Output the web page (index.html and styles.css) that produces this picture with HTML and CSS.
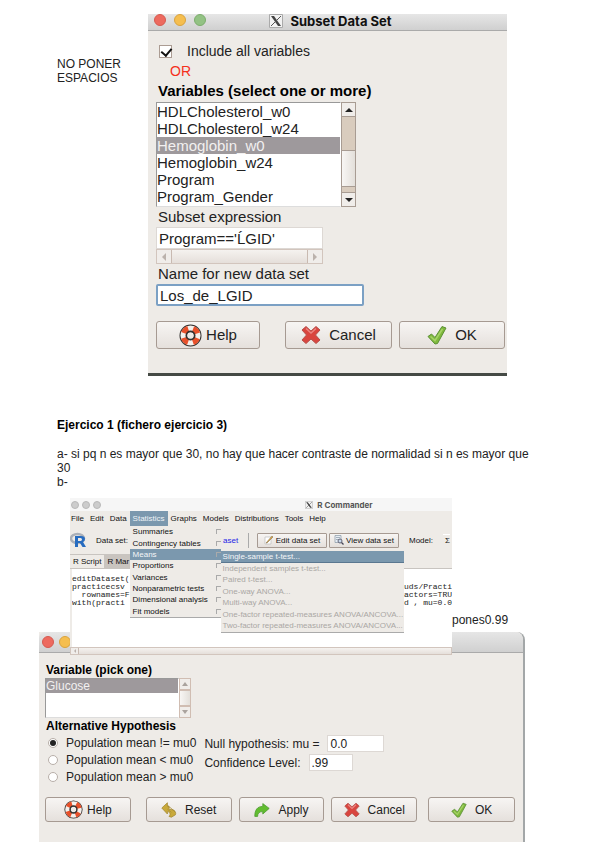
FILE: index.html
```html
<!DOCTYPE html>
<html lang="es">
  <head>
    <meta charset="UTF-8" />
    <meta name="viewport" content="width=device-width, initial-scale=1.0" />
    <title>Ejercicios R Commander</title>
    <link rel="stylesheet" href="styles.css">
  </head>
  <body>
    <!-- Shared icons -->
    <svg class="sprite" aria-hidden="true">
      <symbol id="icon-help" viewBox="0 0 24 24">
        <circle cx="12" cy="12" r="7.5" fill="none" stroke="#33302e" stroke-width="8" />
        <circle cx="12" cy="12" r="7.5" fill="none" stroke="#f4f0ec" stroke-width="6" />
        <circle cx="12" cy="12" r="7.5" fill="none" stroke="#e8502a" stroke-width="6" stroke-dasharray="6.6 5.18" stroke-dashoffset="3.3" transform="rotate(45 12 12)" />
        <circle cx="12" cy="12" r="4.5" fill="none" stroke="#33302e" stroke-width="1.5" />
      </symbol>
      <symbol id="icon-cancel" viewBox="0 0 20 20">
        <path d="M5 1.5 10 6l5-4.500 4 3.500-4.500 5 4.500 5-4 3.500-5-4.500-5 4.500-4-3.500 4.500-5L1 5z" fill="#d9453f" stroke="#b5504b" stroke-linejoin="round" />
        <path d="M5 3.500 10 8l5-4.500" fill="none" stroke="#ea8580" stroke-width="1.500" />
      </symbol>
      <symbol id="icon-ok" viewBox="0 0 20 20">
        <path d="M1 11.500 4.500 9l3.500 3.500L15 1.500 19 3 10.500 18.500 8 19z" fill="#7fb93c" stroke="#5b8f36" stroke-linejoin="round" />
        <path d="M3.500 11.500 8 15.500 15.500 4" fill="none" stroke="#a6d268" stroke-width="1.500" />
      </symbol>
      <symbol id="icon-reset" viewBox="0 0 20 20">
        <path d="M1 7.500 8 1v4h2v4l6 1c2 2 3 4 2 6l-5 3-3-1c2-2 2-4-1-6H8v3z" fill="#c9a93a" stroke="#a68b35" stroke-linejoin="round" />
        <path d="m8 5 5 3 5 5M8 9l5 4" fill="none" stroke="#a68b35" />
      </symbol>
      <symbol id="icon-apply" viewBox="0 0 20 20">
        <path d="m19 8-8-6v3.500C4 5.500 1 10 1 18h3.500c0-4 2-6 6.500-6v3z" fill="#62bd2f" stroke="#4c9c30" stroke-linejoin="round" />
      </symbol>
      <symbol id="icon-x11" viewBox="0 0 14 14">
        <path d="M.5.5h13v13H.5z" fill="#f2f2f2" stroke="#aaa" />
        <path d="M2 2h3l7 10H9z" fill="#444" />
        <path d="M12 2 2 12" stroke="#555" />
      </symbol>
      <symbol id="icon-edit" viewBox="0 0 10 10">
        <path d="M1 2h6v7H1z" fill="#fff" stroke="#bbb" stroke-width=".7" />
        <path d="m2 8 6-7 1 1-6 6z" fill="#e2a83d" stroke="#75664d" stroke-width=".5" />
      </symbol>
      <symbol id="icon-view" viewBox="0 0 10 10">
        <path d="M1 .5h6v7H1zM2 2.500h4M2 4.500h4" fill="#e8eef4" stroke="#8796a5" stroke-width=".7" />
        <circle cx="6" cy="6" r="2" fill="#c7d9ec" stroke="#667" />
        <path d="m7.500 7.500 2 2" stroke="#445" stroke-width="1.200" />
      </symbol>
      <symbol id="icon-r" viewBox="0 0 16 16">
        <ellipse cx="7.500" cy="6.500" rx="6.500" ry="4.500" fill="none" stroke="#abb0b8" stroke-width="2.500" />
        <path d="M5 4h6q4 0 4 3 0 2-2 3l3 5h-3.500L10 11H8v4H5zm3 2v3h2.500q1.500 0 1.500-1.500T10.500 6z" fill="#276cc0" fill-rule="evenodd" />
      </symbol>
    </svg>

    <main class="page">
      <section class="note-row">
        <p class="note">NO PONER ESPACIOS</p>
        <form class="dialog subset">
          <header class="titlebar">
            <span class="lights"><i class="red"></i><i class="yellow"></i><i class="green"></i></span>
            <svg class="x11"><use href="#icon-x11" /></svg>
            <h2>Subset Data Set</h2>
          </header>
          <div class="subset-body">
            <label class="check-row"><input type="checkbox" checked /> Include all variables</label>
            <p class="or">OR</p>
            <label class="strong" for="variables">Variables (select one or more)</label>
            <div class="list">
              <select id="variables" multiple size="6">
                <option>HDLCholesterol_w0</option>
                <option>HDLCholesterol_w24</option>
                <option selected>Hemoglobin_w0</option>
                <option>Hemoglobin_w24</option>
                <option>Program</option>
                <option>Program_Gender</option>
              </select>
              <div class="scroll">
                <button type="button" class="up" aria-label="Up"></button>
                <span class="thumb"></span>
                <button type="button" class="down" aria-label="Down"></button>
              </div>
            </div>
            <label for="expression">Subset expression</label>
            <div class="expression">
              <input type="text" id="expression" value="Program=='ĹGID'" />
              <div class="hscroll">
                <button type="button" class="left" aria-label="Left"></button>
                <button type="button" class="right" aria-label="Right"></button>
              </div>
            </div>
            <label for="newName">Name for new data set</label>
            <input type="text" id="newName" class="new-name" value="Los_de_LGID" />
            <div class="subset-buttons">
              <button type="button" class="btn help"><svg><use href="#icon-help" /></svg>Help</button>
              <button type="button" class="btn"><svg><use href="#icon-cancel" /></svg>Cancel</button>
              <button type="button" class="btn"><svg><use href="#icon-ok" /></svg>OK</button>
            </div>
          </div>
        </form>
      </section>

      <h1>Ejercico 1 (fichero ejercicio 3)</h1>
      <p>a- si pq n es mayor que 30, no hay que hacer contraste de normalidad si n es mayor que 30</p>
      <p>b-</p>

      <section class="commander-row">
        <div class="commander">
          <header class="titlebar">
            <span class="lights"><i></i><i></i><i></i></span>
            <svg class="x11"><use href="#icon-x11" /></svg>
            <h2>R Commander</h2>
          </header>
          <nav class="menubar">
            <a href="#">File</a>
            <a href="#">Edit</a>
            <a href="#">Data</a>
            <div class="menu-holder">
              <a href="#" class="active">Statistics</a>
              <ul class="menu">
                <li>Summaries</li>
                <li>Contingency tables</li>
                <li class="active">Means</li>
                <li>Proportions</li>
                <li>Variances</li>
                <li>Nonparametric tests</li>
                <li>Dimensional analysis</li>
                <li>Fit models</li>
              </ul>
              <ul class="menu submenu">
                <li class="active">Single-sample t-test...</li>
                <li>Independent samples t-test...</li>
                <li>Paired t-test...</li>
                <li>One-way ANOVA...</li>
                <li>Multi-way ANOVA...</li>
                <li>One-factor repeated-measures ANOVA/ANCOVA...</li>
                <li>Two-factor repeated-measures ANOVA/ANCOVA...</li>
              </ul>
            </div>
            <a href="#">Graphs</a>
            <a href="#">Models</a>
            <a href="#">Distributions</a>
            <a href="#">Tools</a>
            <a href="#">Help</a>
          </nav>
          <div class="toolbar">
            <svg class="r-logo"><use href="#icon-r" /></svg>
            <span class="data-label">Data set:</span>
            <button type="button" class="dataset">aset</button>
            <button type="button" class="tool"><svg><use href="#icon-edit" /></svg>Edit data set</button>
            <button type="button" class="tool"><svg><use href="#icon-view" /></svg>View data set</button>
            <span class="model">Model:</span>
            <span class="model-name">Σ</span>
          </div>
          <div class="tabs">
            <button type="button" class="tab">R Script</button>
            <button type="button" class="tab dim">R Mar</button>
          </div>
          <div class="script">
<pre>editDataset(
practicecsv
  rownames=F
with(practi</pre>
<pre>
uds/Practi
actors=TRUE
d , mu=0.0</pre>
          </div>
          <div class="hscroll">
            <button type="button" class="left" aria-label="Left"></button>
          </div>
        </div>
        <span class="answer">pones0.99</span>
      </section>

      <form class="dialog ttest">
        <header class="titlebar">
          <span class="lights"><i class="red"></i><i class="yellow"></i></span>
        </header>
        <div class="ttest-body">
          <label class="strong" for="variable">Variable (pick one)</label>
          <div class="list">
            <select id="variable" size="2">
              <option selected>Glucose</option>
            </select>
            <div class="scroll">
              <button type="button" class="up" aria-label="Up"></button>
              <span class="thumb"></span>
              <button type="button" class="down" aria-label="Down"></button>
            </div>
          </div>
          <p class="strong">Alternative Hypothesis</p>
          <div class="options">
            <div class="radios">
              <label><input type="radio" name="alt" checked /> Population mean != mu0</label>
              <label><input type="radio" name="alt" /> Population mean &lt; mu0</label>
              <label><input type="radio" name="alt" /> Population mean &gt; mu0</label>
            </div>
            <div class="fields">
              <label>Null hypothesis: mu = <input type="text" class="mu" value="0.0" /></label>
              <label>Confidence Level: <input type="text" class="level" value=".99" /></label>
            </div>
          </div>
          <div class="ttest-buttons">
            <button type="button" class="btn help"><svg><use href="#icon-help" /></svg>Help</button>
            <button type="button" class="btn"><svg><use href="#icon-reset" /></svg>Reset</button>
            <button type="button" class="btn"><svg><use href="#icon-apply" /></svg>Apply</button>
            <button type="button" class="btn"><svg><use href="#icon-cancel" /></svg>Cancel</button>
            <button type="button" class="btn ok"><svg><use href="#icon-ok" /></svg>OK</button>
          </div>
        </div>
      </form>
    </main>
  </body>
</html>
```
FILE: styles.css
```css
* {
  margin: 0;
  padding: 0;
  box-sizing: border-box;
}

body {
  font-family: "Liberation Sans", Arial, sans-serif;
  font-size: 12px;
  line-height: 14px;
  color: #222;
  background: #fff;
}

button,
input,
select {
  font: inherit;
  color: inherit;
}

.sprite {
  display: none;
}

.page {
  padding: 14px 57px 6px;
}

h1 {
  margin: 42px 0 15px;
  font-size: 12px;
  line-height: 14px;
  color: #000;
}

.note-row {
  display: flex;
  padding-right: 35px;
}

.note {
  width: 91px;
  padding: 43px 20px 0 0;
}

/* Dialog windows */
.dialog {
  background: #eeebe7;
}

.titlebar {
  display: flex;
  align-items: center;
  justify-content: center;
  position: relative;
  background: linear-gradient(#e6e6e6, #d0d0d0);
  border-bottom: 1px solid #aaa;
}

.titlebar h2 {
  font-family: Inter, sans-serif;
  font-size: 13px;
  line-height: 14px;
  color: #111;
}

.lights {
  position: absolute;
  left: 6px;
  display: flex;
  gap: 8px;
}

.lights i {
  width: 12px;
  height: 12px;
  border-radius: 50%;
  background: #ccc;
  border: 1px solid #b8b8b8;
}

.lights .red {
  background: #ed6a5f;
  border-color: #d65a50;
}

.lights .yellow {
  background: #f5be4f;
  border-color: #d9a33e;
}

.lights .green {
  background: #93c284;
  border-color: #7cad6d;
}

.x11 {
  width: 14px;
  height: 14px;
  margin-right: 7px;
}

.strong {
  font-weight: bold;
  color: #000;
}

.list {
  display: flex;
}

select {
  flex: 1;
  appearance: none;
  background: #fff;
  border: 1px solid #999;
  border-right-color: #fff;
  border-bottom-color: #ddd;
  border-radius: 0;
  outline: none;
  overflow: hidden;
}

option {
  padding: 0;
}

option:checked {
  background: linear-gradient(#9e999c, #9e999c);
  -webkit-text-fill-color: #f2f0f0;
}

.scroll {
  display: flex;
  flex-direction: column;
  justify-content: space-between;
  width: 15px;
  background: #d9ccbe;
  border: 1px solid #a89c93;
}

.scroll button,
.hscroll button {
  display: flex;
  align-items: center;
  justify-content: center;
  background: #f0edea;
  border: 0 solid #a89c93;
}

.scroll button {
  height: 14px;
}

.scroll .up {
  border-bottom-width: 1px;
}

.scroll .down {
  border-top-width: 1px;
}

.scroll button::before,
.hscroll button::before {
  content: "";
  border: 4px solid transparent;
}

.scroll .up::before {
  border-top-width: 0;
  border-bottom-color: #222;
}

.scroll .down::before {
  border-bottom-width: 0;
  border-top-color: #222;
}

.thumb {
  height: 37px;
  background: linear-gradient(90deg, #f8f6f4, #e3dfda);
  border: solid #a89c93;
  border-width: 1px 0;
}

.hscroll {
  display: flex;
  justify-content: space-between;
  height: 15px;
  background: linear-gradient(#f5f2ef, #e5dfda);
  border: 1px solid #d2c5bd;
}

.hscroll button {
  width: 15px;
  border-color: #c9bab1;
}

.hscroll .left {
  border-right-width: 1px;
}

.hscroll .right {
  border-left-width: 1px;
}

.hscroll .left::before {
  border-left-width: 0;
  border-right-color: #bbb2ac;
}

.hscroll .right::before {
  border-right-width: 0;
  border-left-color: #bbb2ac;
}

input[type="text"] {
  background: #fff;
  border: 1px solid #ddd8d4;
  outline: none;
}

.btn {
  display: flex;
  align-items: center;
  justify-content: center;
  gap: 8px;
  background: linear-gradient(#f7f5f3, #e5e0dc);
  border: 1px solid #a69a92;
  border-radius: 3px;
}

.btn svg {
  width: 20px;
  height: 20px;
}

.btn.help {
  gap: 4px;
}

.btn.help svg {
  width: 23px;
  height: 23px;
}

/* Subset Data Set */
.subset {
  flex: 1;
  font-size: 15px;
  line-height: 20px;
  border-bottom: 3px solid #454a45;
}

.subset .titlebar {
  height: 17px;
  padding-bottom: 2px;
  padding-left: 6px;
}

.subset .lights {
  top: 0;
}

.subset-body {
  display: flex;
  flex-direction: column;
  align-items: flex-start;
  padding: 10px 2px 24px 8px;
}

.subset-body > label {
  padding-left: 2px;
}

.subset-body .check-row {
  display: flex;
  align-items: center;
  gap: 15px;
  padding-left: 3px;
  font-size: 14px;
}

input[type="checkbox"] {
  appearance: none;
  display: flex;
  width: 13px;
  height: 13px;
  background: #fff;
  border: 1px solid #ab9c93;
}

input[type="checkbox"]:checked::before {
  content: "";
  width: 5px;
  height: 8px;
  margin-left: 3px;
  border: solid #111;
  border-width: 0 2px 2px 0;
  transform: rotate(40deg);
}

.or {
  padding-left: 14px;
  font-size: 14px;
  color: #f5301c;
}

.subset .list {
  width: 200px;
  height: 105px;
  margin-top: 1px;
}

.subset option {
  min-height: 17px;
  line-height: 17px;
}

.subset .scroll .thumb {
  margin-top: 28px;
}

.expression {
  width: 167px;
}

.expression input {
  display: block;
  width: 100%;
  height: 22px;
  padding: 0 2px;
}

.subset-body .new-name {
  width: 208px;
  height: 22px;
  padding: 0 2px;
  border: 2px solid #7ba0c4;
  border-radius: 2px;
}

.subset-buttons {
  display: grid;
  grid-template-columns: 122fr 107fr 106fr;
  column-gap: 7px;
  width: 100%;
  margin-top: 15px;
}

.subset-buttons .btn {
  height: 28px;
}

.subset-buttons .help {
  margin-right: 18px;
}

/* R Commander */
.commander-row {
  display: flex;
  position: relative;
  z-index: 1;
  margin: 9px 0 -23px 13px;
}

.answer {
  align-self: flex-end;
  width: 90px;
  padding-bottom: 28px;
}

.commander {
  flex: 1;
  min-width: 0;
  font-size: 8px;
  line-height: 11px;
  color: #111;
  background: #eeebe7;
}

.commander .titlebar {
  height: 13px;
  padding-left: 156px;
  background: #f6f6f6;
  border: 0;
}

.commander .titlebar h2 {
  font-size: 8px;
  color: #555;
}

.commander .lights {
  left: 1px;
  gap: 3px;
}

.commander .lights i {
  width: 8px;
  height: 8px;
}

.commander .x11 {
  width: 8px;
  height: 8px;
  margin-right: 4px;
}

.menubar {
  display: flex;
  height: 15px;
}

.menubar a {
  display: block;
  padding: 0 3px;
  line-height: 15px;
  color: #111;
  text-decoration: none;
}

.menubar > a:first-child {
  padding-left: 1px;
}

.menubar a.active {
  color: #eef3f6;
  background: #7b98ae;
}

.menu-holder {
  position: relative;
}

.menu {
  position: absolute;
  top: 15px;
  left: 0;
  display: grid;
  grid-auto-rows: 1fr;
  width: 91px;
  height: 92px;
  list-style: none;
  white-space: nowrap;
  background: #eeebe7;
  border-bottom: 1px solid #aaa;
}

.menu li {
  padding-left: 3px;
}

.menu li.active {
  color: #f4f6f8;
  background: #7b98ae;
}

.menu:not(.submenu) li {
  display: flex;
  align-items: center;
  justify-content: space-between;
}

.menu:not(.submenu) li::after {
  content: "";
  width: 4px;
  height: 4px;
  border: solid #aaa;
  border-width: 1px 0 0 1px;
}

.menu.submenu {
  top: 40px;
  left: 91px;
  width: 183px;
  height: 82px;
  color: #aaa7a4;
}

.menu.submenu li {
  padding-left: 2px;
}

.submenu .active {
  box-shadow: inset 0 -1px #5a7790;
}

.toolbar {
  display: flex;
  align-items: center;
  height: 28px;
  white-space: nowrap;
  overflow: hidden;
}

.r-logo {
  flex: none;
  width: 16px;
  height: 16px;
}

.data-label {
  width: 137px;
  padding-left: 10px;
}

.dataset {
  width: 26px;
  height: 15px;
  margin-right: 8px;
  text-align: left;
  color: #2323e6;
  background: none;
  border: 0;
  border-right: 1px solid #aaa;
}

.tool {
  display: flex;
  align-items: center;
  justify-content: center;
  gap: 2px;
  width: 70px;
  height: 15px;
  margin-right: 2px;
  background: linear-gradient(#f7f5f3, #e5e0dc);
  border: 1px solid #a69a92;
  border-radius: 1px;
}

.tool svg {
  width: 10px;
  height: 10px;
}

.model {
  margin: 0 10px 0 8px;
}

.model-name {
  padding-left: 2px;
  border-top: 1px solid #fff;
}

.tabs {
  display: flex;
  height: 15px;
  border-bottom: 1px solid #c8c4c0;
}

.tab {
  padding: 0 3px;
  background: #eeebe7;
  border: 0;
  border-top: 1px solid #c8c4c0;
}

.tab.dim {
  background: #c9c4bf;
}

.script {
  display: flex;
  justify-content: space-between;
  height: 78px;
  padding-top: 6px;
  color: #222;
  background: #fff;
  border-left: 2px solid #eeebe7;
  overflow: hidden;
}

.script pre {
  font-family: "Liberation Mono", monospace;
  font-size: 8px;
  line-height: 8px;
}

.script pre:last-child {
  width: 48px;
  padding-top: 8px;
}

.commander .hscroll {
  height: 8px;
}

.commander .hscroll button {
  width: 8px;
}

.commander .hscroll button::before {
  border-width: 2px;
  border-left-width: 0;
}

/* Single-sample t-test */
.ttest {
  margin: 0 17px 0 -18px;
  border-right: 2px solid #a3a7a8;
  border-top-right-radius: 8px;
}

.ttest .titlebar {
  height: 21px;
  border-radius: 6px 8px 0 0;
}

.ttest .lights {
  left: 3px;
  gap: 5px;
}

.ttest-body {
  padding: 9px 8px 20px 6px;
}

.ttest .strong {
  display: block;
  padding-left: 1px;
  line-height: 16px;
}

.ttest .list {
  width: 146px;
  height: 40px;
}

.ttest option {
  min-height: 14px;
  line-height: 14px;
}

.ttest .scroll {
  width: 12px;
  border-color: #d0bdb2;
}

.ttest .scroll button {
  height: 11px;
  border-color: #d0bdb2;
}

.ttest .scroll button::before {
  border-left-width: 3px;
  border-right-width: 3px;
}

.ttest .scroll .up::before {
  border-bottom-color: #aaa39e;
}

.ttest .scroll .down::before {
  border-top-color: #aaa39e;
}

.ttest .thumb {
  height: 16px;
  border-color: #d0bdb2;
}

.options {
  display: flex;
  gap: 8px;
}

.radios {
  display: grid;
  padding-left: 3px;
}

.radios label {
  display: flex;
  align-items: center;
  gap: 8px;
  height: 17px;
}

input[type="radio"] {
  appearance: none;
  display: flex;
  align-items: center;
  justify-content: center;
  width: 10px;
  height: 10px;
  background: #fff;
  border: 1px solid #b8afa9;
  border-radius: 50%;
}

input[type="radio"]:checked::before {
  content: "";
  width: 6px;
  height: 6px;
  background: #222;
  border-radius: 50%;
}

.fields label {
  display: flex;
  align-items: center;
  gap: 8px;
  height: 19px;
}

.fields input {
  height: 17px;
  padding: 0 2px;
}

.mu {
  width: 57px;
}

.level {
  width: 44px;
}

.ttest-buttons {
  display: grid;
  grid-template-columns: 94fr 86fr 86fr 86fr 91fr;
  gap: 7px;
  margin-top: 12px;
}

.ttest-buttons .btn {
  height: 25px;
}

.ttest-buttons .help {
  margin-right: 8px;
}

.ttest-buttons .ok {
  margin-left: 4px;
}

.ttest-buttons .btn svg {
  width: 16px;
  height: 16px;
}

.ttest-buttons .btn.help svg {
  width: 19px;
  height: 19px;
}
```
